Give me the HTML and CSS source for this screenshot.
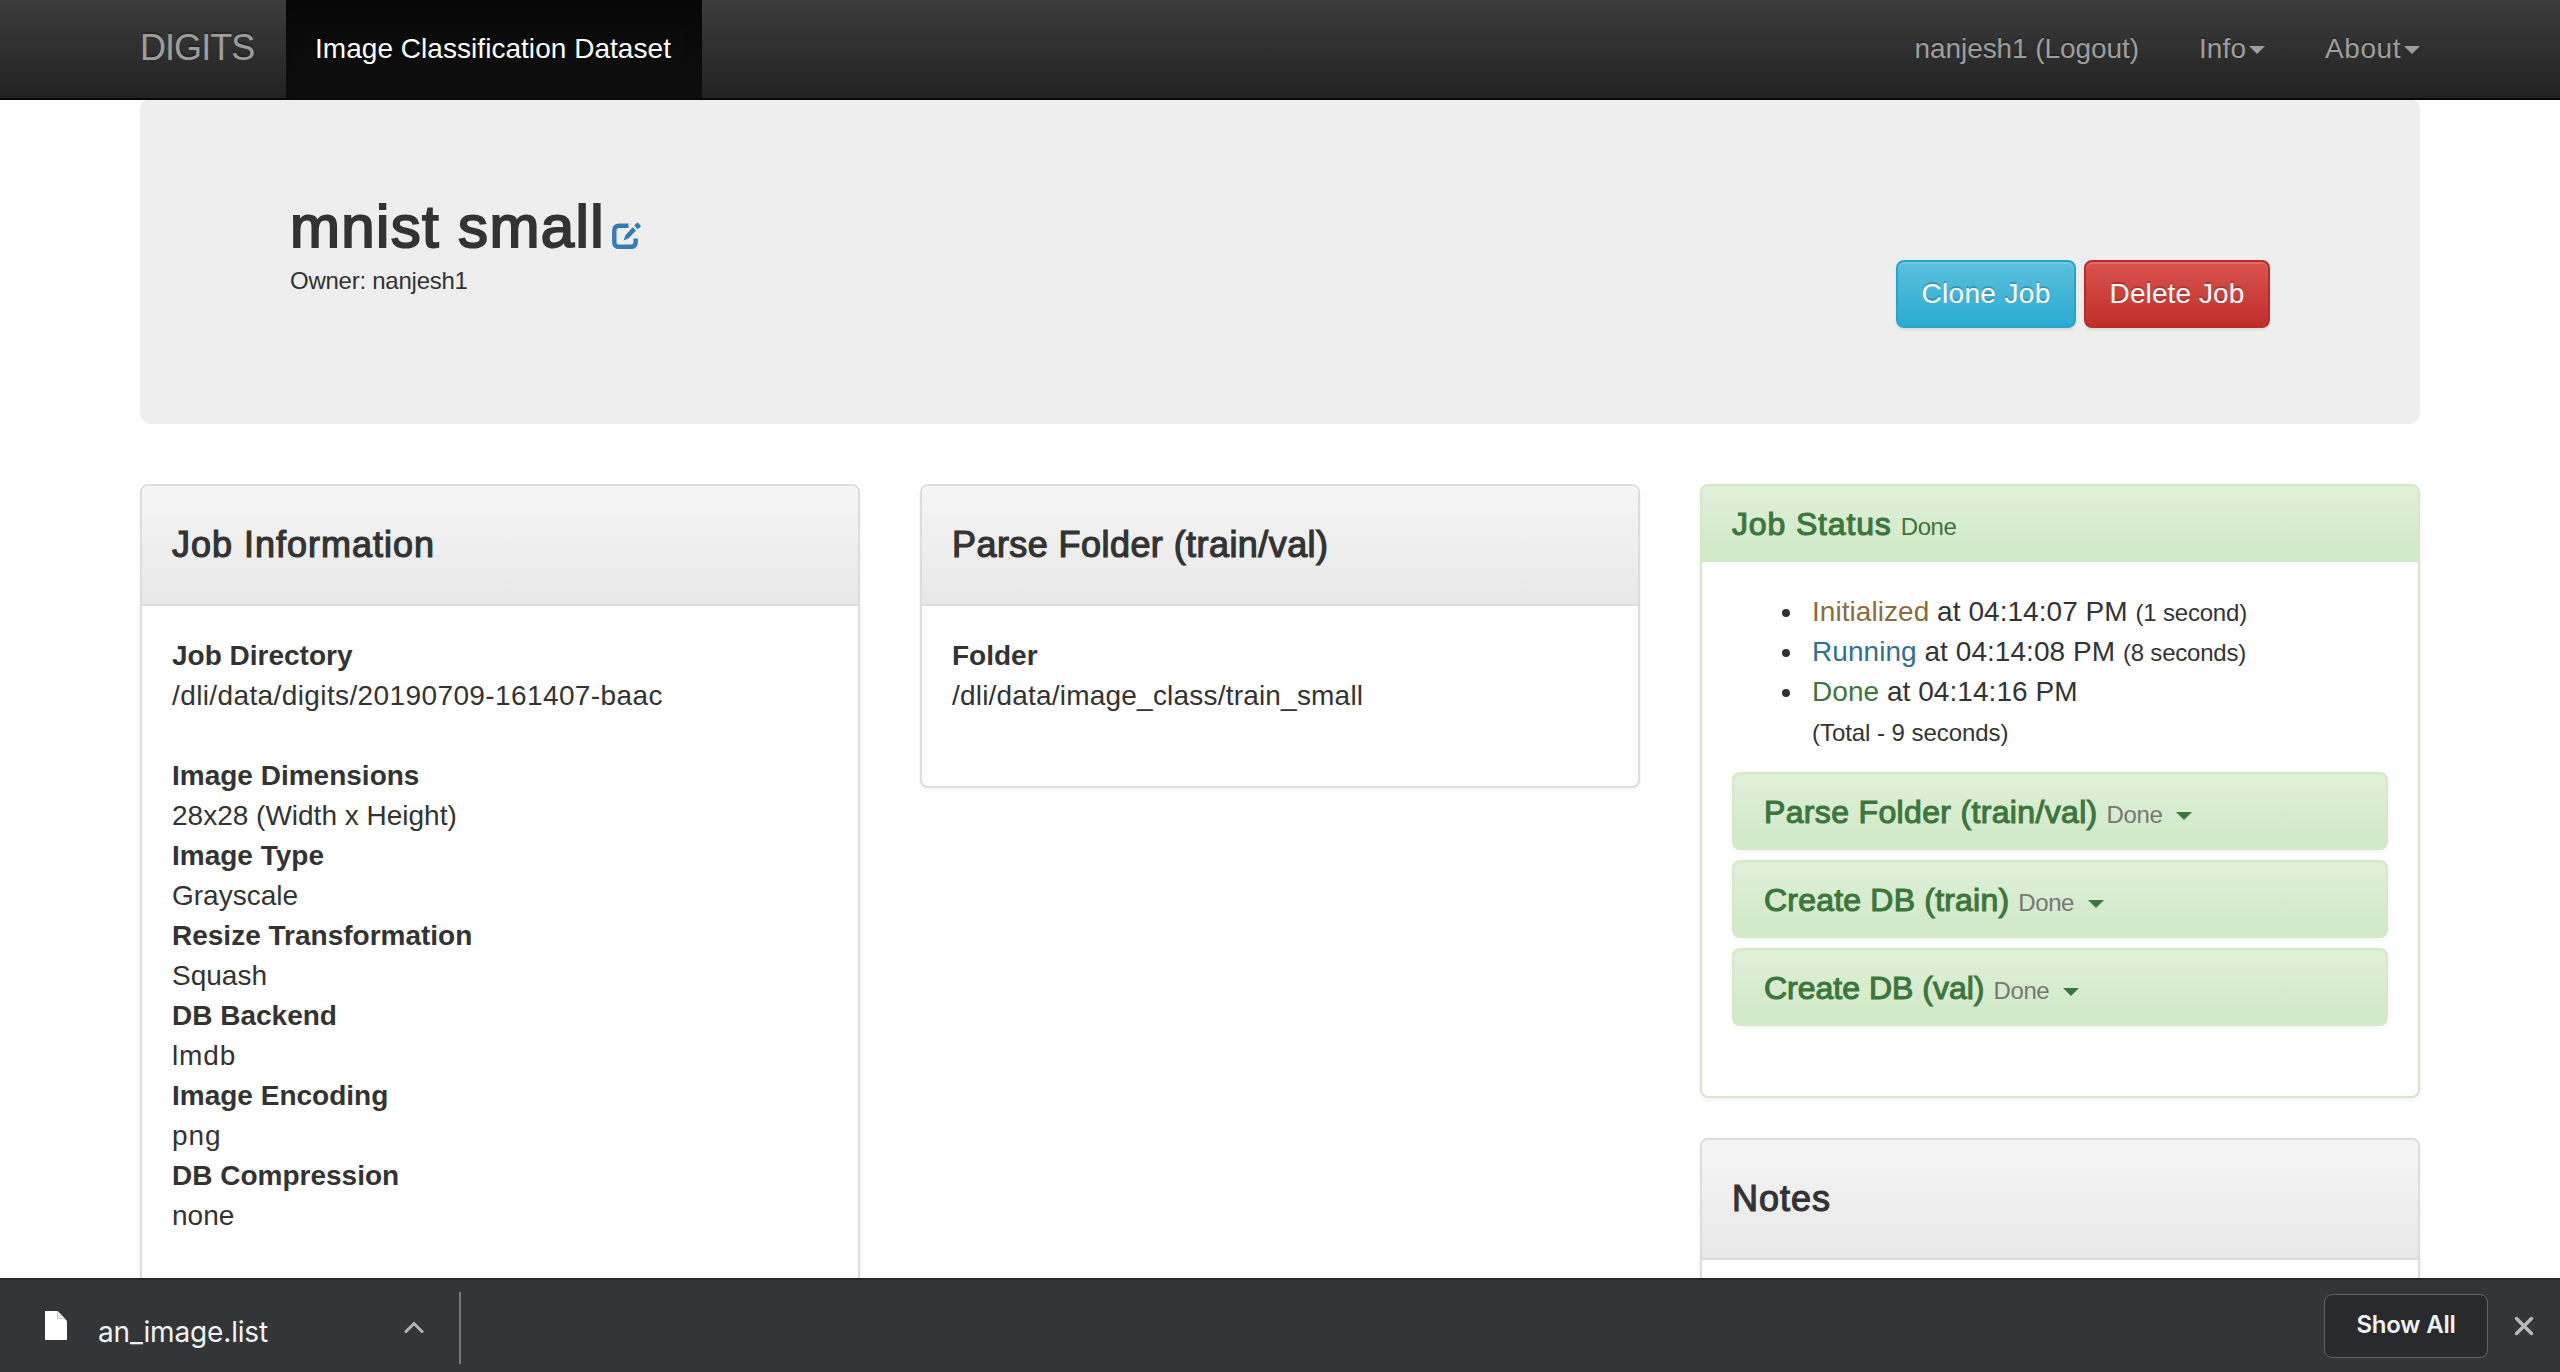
FILE: index.html
```html
<!DOCTYPE html>
<html lang="en">
<head>
<meta charset="utf-8">
<title>mnist small - DIGITS</title>
<link rel="stylesheet" href="styles.css">
</head>
<body>
<nav class="navbar">
  <div class="navbar-inner">
    <a class="brand">DIGITS</a>
    <a class="nav-link active">Image Classification Dataset</a>
    <div class="nav-right">
      <a class="nav-link">nanjesh1 (Logout)</a>
      <a class="nav-link nav-info">Info<span class="caret"></span></a>
      <a class="nav-link nav-about">About<span class="caret"></span></a>
    </div>
  </div>
</nav>

<main class="page">
  <header class="jumbotron">
    <div>
      <h1 class="title"><span>mnist small</span><svg class="edit" width="29" height="28" viewBox="0 0 29 28"><path d="M16.5 3.7H7.2Q2.3 3.7 2.3 8.6V19.9Q2.3 24.8 7.2 24.8H18.8Q23.7 24.8 23.7 19.9V16.5" fill="none" stroke="#337ab7" stroke-width="4.4"/><path d="M11.6 18.6L13.4 13.2L20.6 5.3L24 8.6L16.7 16.2ZM22.2 3.6L24.8 1Q25.5.3 26.2 1L28.6 3.4Q29.2 4.1 28.6 4.8L25.7 7.2Z" fill="#337ab7"/></svg></h1>
      <small class="owner">Owner: nanjesh1</small>
    </div>
    <div class="actions">
      <a class="btn btn-info">Clone Job</a>
      <a class="btn btn-danger">Delete Job</a>
    </div>
  </header>

  <div class="columns">
    <section class="panel panel-info">
      <div class="panel-heading"><h3>Job Information</h3></div>
      <div class="panel-body">
        <dl>
          <dt>Job Directory</dt>
          <dd class="path">/dli/data/digits/20190709-161407-baac</dd>
        </dl>
        <dl>
          <dt>Image Dimensions</dt>
          <dd>28x28 (Width x Height)</dd>
          <dt>Image Type</dt>
          <dd>Grayscale</dd>
          <dt>Resize Transformation</dt>
          <dd>Squash</dd>
          <dt>DB Backend</dt>
          <dd class="wide">lmdb</dd>
          <dt>Image Encoding</dt>
          <dd class="wide">png</dd>
          <dt>DB Compression</dt>
          <dd>none</dd>
        </dl>
      </div>
    </section>

    <section class="panel">
      <div class="panel-heading"><h3 class="parse">Parse Folder (train/val)</h3></div>
      <div class="panel-body">
        <dl>
          <dt>Folder</dt>
          <dd class="folder">/dli/data/image_class/train_small</dd>
        </dl>
      </div>
    </section>

    <div class="column">
      <section class="panel panel-success">
        <div class="status-heading"><h4>Job Status</h4><small>Done</small></div>
        <div class="panel-body">
          <ul class="timeline">
            <li><span class="warning">Initialized</span> at 04:14:07 PM <small>(1 second)</small></li>
            <li><span class="running">Running</span> at 04:14:08 PM <small>(8 seconds)</small></li>
            <li><span class="done">Done</span> at 04:14:16 PM<br><small class="total">(Total - 9 seconds)</small></li>
          </ul>
          <div class="tasks">
            <div class="task"><h4 class="task-parse">Parse Folder (train/val)</h4><small>Done</small><span class="caret"></span></div>
            <div class="task"><h4 class="task-train">Create DB (train)</h4><small>Done</small><span class="caret"></span></div>
            <div class="task"><h4 class="task-val">Create DB (val)</h4><small>Done</small><span class="caret"></span></div>
          </div>
        </div>
      </section>
      <section class="panel panel-notes">
        <div class="panel-heading"><h3>Notes</h3></div>
        <div class="panel-body"></div>
      </section>
    </div>
  </div>
</main>

<footer class="downloads">
  <svg class="file" width="24" height="31" viewBox="0 0 24 31"><path d="M1 1H13.5L23 11V30H1Z" fill="#fff"/><path d="M13.5 1V8.5H21" fill="#f1f1f1" stroke="#c4c6c8" stroke-width="1"/></svg>
  <span class="filename">an_image.list</span>
  <svg class="chevron" width="20" height="14" viewBox="0 0 20 14"><path d="M2 11.5L10 3.5L18 11.5" fill="none" stroke="#b2b4b5" stroke-width="3" stroke-linecap="round"/></svg>
  <span class="divider"></span>
  <a class="show-all">Show All</a>
  <svg class="close" width="20" height="20" viewBox="0 0 20 20"><path d="M2.5 2.5L17.5 17.5M17.5 2.5L2.5 17.5" fill="none" stroke="#b8babb" stroke-width="3.4" stroke-linecap="round"/></svg>
</footer>
</body>
</html>
```
FILE: styles.css
```css
* { box-sizing: border-box; }

body {
  margin: 0;
  height: 1372px;
  display: flex;
  flex-direction: column;
  overflow: hidden;
  background: #fff;
  color: #333;
  font: 28px/40px "Liberation Sans", Arial, sans-serif;
}

h1, h3, h4, dl, dd, ul { margin: 0; padding: 0; }
small { font-size: 24px; }

/* Navigation bar */
.navbar {
  position: relative;
  z-index: 1;
  flex: none;
  height: 100px;
  border-bottom: 2px solid #080808;
  background: linear-gradient(#3c3c3c, #222);
}
.navbar-inner {
  width: 2280px;
  height: 98px;
  margin: 0 auto;
  display: flex;
}
.brand, .nav-link {
  display: flex;
  align-items: center;
  color: #9d9d9d;
  text-shadow: 0 -2px 0 rgba(0, 0, 0, .25);
  white-space: nowrap;
}
.brand {
  width: 146px;
  padding-bottom: 2px;
  font-size: 36px;
  letter-spacing: -.95px;
}
.nav-link { padding: 0 30px 1px; letter-spacing: -.08px; }
.active {
  width: 416px;
  padding-left: 29px;
  color: #fff;
  letter-spacing: .04px;
  background: linear-gradient(#080808, #0f0f0f);
  box-shadow: inset 0 6px 18px rgba(0, 0, 0, .25);
}
.nav-right { display: flex; margin-left: auto; margin-right: -30px; }
.nav-info { letter-spacing: .1px; }
.nav-about { letter-spacing: .55px; }
.caret {
  width: 0;
  height: 0;
  margin: 3px 0 0 3px;
  border: 8px solid transparent;
  border-top-color: currentColor;
  border-bottom: 0;
}

/* Page header */
.page {
  flex: 1;
  min-height: 0;
  width: 2300px;
  margin: -2px auto 0;
  padding: 0 10px;
  overflow: hidden;
}
.jumbotron {
  display: flex;
  justify-content: space-between;
  height: 326px;
  padding: 96px 150px;
  border-radius: 12px;
  background: #eee;
}
.title {
  display: flex;
  height: 67px;
  font-size: 60px;
  font-weight: 400;
  line-height: 66px;
  letter-spacing: 1.35px;
  -webkit-text-stroke: 2px #333;
}
.edit { margin: 28px 0 0 7px; -webkit-text-stroke: 0; }
.owner { display: block; letter-spacing: -.25px; }
.actions { display: flex; gap: 8px; padding-top: 66px; }
.btn {
  height: 68px;
  padding-bottom: 1px;
  border: 2px solid;
  border-radius: 8px;
  color: #fff;
  line-height: 64px;
  text-align: center;
  text-shadow: 0 -2px 0 rgba(0, 0, 0, .2);
  box-shadow: inset 0 2px 0 rgba(255, 255, 255, .15), 0 2px 2px rgba(0, 0, 0, .075);
}
.btn-info {
  width: 180px;
  border-color: #28a4c9;
  background: linear-gradient(#5bc0de, #2aabd2);
  letter-spacing: .35px;
}
.btn-danger {
  width: 186px;
  border-color: #b92c28;
  background: linear-gradient(#d9534f, #c12e2a);
  letter-spacing: .1px;
}

/* Panels */
.columns {
  display: grid;
  grid-template-columns: repeat(3, 720px);
  gap: 60px;
  align-items: start;
  margin-top: 60px;
}
.column { display: grid; gap: 40px; }
.panel {
  border: 2px solid #ddd;
  border-radius: 8px;
  background: #fff;
  box-shadow: 0 2px 4px rgba(0, 0, 0, .05);
}
.panel-info { min-height: 900px; }
.panel-heading {
  display: flex;
  align-items: center;
  height: 120px;
  padding-left: 30px;
  border-bottom: 2px solid #ddd;
  border-radius: 6px 6px 0 0;
  background: linear-gradient(#f5f5f5, #e8e8e8);
}
h3 {
  font-size: 36px;
  font-weight: 400;
  letter-spacing: 1px;
  -webkit-text-stroke: 1.2px #333;
}
.parse { letter-spacing: .43px; }
.panel-body { padding: 30px 30px 70px; }
dl + dl { margin-top: 40px; }
dt { font-weight: 700; }
dd { letter-spacing: 0; }
.path { letter-spacing: .39px; }
.folder { letter-spacing: .2px; }
.wide { letter-spacing: .9px; }

/* Job status */
.panel-success { border-color: #d6e9c6; }
.status-heading, .task {
  display: flex;
  align-items: baseline;
  color: #3c763d;
  background: linear-gradient(#dff0d8, #d0e9c6);
}
.status-heading {
  height: 76px;
  padding: 18px 0 0 30px;
  border-radius: 6px 6px 0 0;
}
h4 {
  font-size: 32px;
  font-weight: 400;
  letter-spacing: .85px;
  -webkit-text-stroke: 1.1px currentColor;
}
.status-heading small, .task small { margin-left: 9px; letter-spacing: -.4px; }
.timeline { padding-left: 80px; list-style: none; letter-spacing: .05px; }
.timeline li { height: 40px; }
.timeline li:last-child { height: 80px; }
.timeline small { line-height: 1; letter-spacing: -.2px; }
.timeline .total { letter-spacing: -.05px; }
.timeline li::before {
  content: "";
  display: inline-block;
  width: 8px;
  height: 8px;
  margin: 0 22px 0 -30px;
  border-radius: 50%;
  background: #333;
  vertical-align: 4px;
}
.warning { color: #8a6d3b; }
.running { color: #31708f; }
.done { color: #3c763d; }
.tasks { display: grid; gap: 10px; margin-top: 20px; }
.task {
  height: 78px;
  padding: 18px 0 0 30px;
  border: 2px solid #d6e9c6;
  border-radius: 8px;
  box-shadow: 0 2px 4px rgba(0, 0, 0, .05);
}
.task small { color: #777; }
.task .caret { align-self: flex-start; margin: 20px 0 0 14px; }
.task-parse { letter-spacing: .34px; }
.task-train { letter-spacing: .2px; }
.task-val { letter-spacing: 0; }
.panel-notes { min-height: 300px; }

/* Download shelf */
.downloads {
  position: relative;
  z-index: 1;
  flex: none;
  display: flex;
  align-items: flex-start;
  height: 94px;
  padding: 0 26px 0 44px;
  border-top: 2px solid #27282a;
  background: #323639;
  font-family: Inter, sans-serif;
  color: #f1f3f4;
}
.file { margin-top: 30px; }
.filename { width: 306px; margin: 32px 0 0 30px; letter-spacing: -.16px; }
.chevron { margin-top: 40px; }
.divider { width: 2px; height: 72px; margin: 12px 0 0 35px; background: #75787a; }
.show-all {
  width: 164px;
  height: 64px;
  margin: 14px 26px 0 auto;
  border: 1px solid #5f6368;
  border-radius: 8px;
  background: #292a2d;
  font-size: 24px;
  font-weight: 600;
  letter-spacing: -.2px;
  line-height: 60px;
  text-align: center;
}
.close { margin-top: 36px; }
```
